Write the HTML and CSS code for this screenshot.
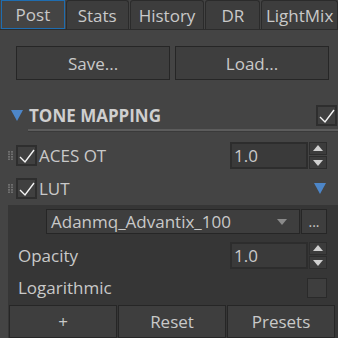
FILE: index.html
```html
<!DOCTYPE html>
<html lang="en">
<head>
  <meta charset="UTF-8" />
  <title>Post</title>
  <link rel="stylesheet" href="styles.css">
</head>
<body>
  <nav class="tabs">
    <div class="tab active tab-post">Post</div>
    <div class="tab tab-stats">Stats</div>
    <div class="tab tab-history">History</div>
    <div class="tab tab-dr">DR</div>
    <div class="tab tab-lightmix">LightMix</div>
  </nav>

  <div class="file-buttons">
    <button class="btn">Save...</button>
    <button class="btn">Load...</button>
  </div>

  <!-- Tone mapping rollout -->
  <div class="section-head">
    <span class="arrow-down"></span>
    <span class="section-title">TONE MAPPING</span>
    <span class="check">
      <svg viewBox="0 0 21 21"><polyline points="4,12 9,17 18,5" /></svg>
    </span>
  </div>

  <div class="row">
    <span class="grip"></span>
    <span class="check">
      <svg viewBox="0 0 21 21"><polyline points="4,12 9,17 18,5" /></svg>
    </span>
    <span class="label">ACES OT</span>
    <div class="spin">
      <input class="num" value="1.0" />
      <div class="spin-btns">
        <span class="spin-up"></span>
        <span class="spin-down"></span>
      </div>
    </div>
  </div>

  <div class="row">
    <span class="grip"></span>
    <span class="check">
      <svg viewBox="0 0 21 21"><polyline points="4,12 9,17 18,5" /></svg>
    </span>
    <span class="label">LUT</span>
    <span class="arrow-down small"></span>
  </div>

  <div class="panel">
    <div class="lut-row">
      <div class="select">
        <span>Adanmq_Advantix_100</span>
        <span class="select-arrow"></span>
      </div>
      <button class="dots">...</button>
    </div>

    <div class="prow">
      <span class="label">Opacity</span>
      <div class="spin">
        <input class="num" value="1.0" />
        <div class="spin-btns">
          <span class="spin-up"></span>
          <span class="spin-down"></span>
        </div>
      </div>
    </div>

    <div class="prow log-row">
      <span class="label">Logarithmic</span>
      <span class="check"></span>
    </div>

    <div class="bottom-buttons">
      <button class="btn">+</button>
      <button class="btn">Reset</button>
      <button class="btn">Presets</button>
    </div>
  </div>
</body>
</html>
```

FILE: styles.css
```css
/* Base */
body {
  margin: 0;
  background: #444444;
  color: #c9c9c9;
  font-family: 'Open Sans', 'Noto Sans', sans-serif;
  font-size: 17px;
  width: 338px;
  height: 338px;
  overflow: hidden;
}

/* Tabs */
.tabs {
  display: flex;
  height: 29px;
  border-bottom: 1px solid #2c2c2c;
}

.tab {
  box-sizing: border-box;
  height: 29px;
  display: flex;
  align-items: center;
  justify-content: center;
  background: #3d3d3d;
  border: 1px solid #2b2b2b;
  border-bottom: none;
  border-radius: 3px 3px 0 0;
  margin-right: 1px;
  line-height: 1;
}

.tab.active {
  background: #444444;
  border: 1px solid #1f6db0;
  border-radius: 0;
}

.tab-post { width: 64px; margin-left: 1px; }
.tab-stats { width: 63px; }
.tab-history { width: 75px; }
.tab-dr { width: 55px; }
.tab-lightmix { width: 77px; margin-right: 0; }

/* Buttons */
.btn {
  box-sizing: border-box;
  background: #3e3e3e;
  border: 1px solid #262626;
  color: #c9c9c9;
  font-family: inherit;
  font-size: 17px;
  padding: 0;
}

.file-buttons {
  display: flex;
  gap: 5px;
  padding: 16px 9px 0 16px;
}

.file-buttons .btn {
  width: 155px;
  height: 34px;
}

/* Section header */
.section-head {
  display: flex;
  align-items: center;
  height: 26px;
  margin-top: 22px;
  padding-left: 11px;
  position: relative;
}

.section-head::after {
  content: "";
  position: absolute;
  left: 28px;
  right: 0;
  bottom: -4px;
  height: 2px;
  background: #5c5c5c;
  border-bottom: 1px solid #3a3a3a;
}

.arrow-down {
  width: 0;
  height: 0;
  border-left: 6px solid transparent;
  border-right: 6px solid transparent;
  border-top: 11px solid #4d86c8;
}

.arrow-down.small {
  margin-left: auto;
  margin-right: 12px;
}

.section-title {
  font-weight: 700;
  font-size: 17px;
  margin-left: 6px;
  color: #cfcfcf;
}

.section-head .check {
  margin-left: auto;
  margin-right: 1px;
}

/* Checkboxes */
.check {
  box-sizing: border-box;
  width: 21px;
  height: 21px;
  border: 2px solid #2e2e2e;
  background: #404040;
  flex: none;
  display: block;
}

.check svg {
  display: block;
  width: 21px;
  height: 21px;
  margin: -2px;
}

.check polyline {
  fill: none;
  stroke: #f4f4f4;
  stroke-width: 1.4;
}

/* Rows */
.row {
  display: flex;
  align-items: center;
  height: 28px;
  padding-left: 8px;
}

.section-head + .row {
  margin-top: 13px;
}

.row + .row {
  margin-top: 5px;
}

.grip {
  width: 5px;
  height: 9px;
  margin-right: 3px;
  background-image: radial-gradient(circle at 1px 1px, #6f6f6f 1px, transparent 1px);
  background-size: 3px 2.5px;
}

.label {
  margin-left: 2px;
  color: #c9c9c9;
}

/* Spinner */
.spin {
  display: flex;
  gap: 1px;
  margin-left: auto;
  margin-right: 11px;
}

.num {
  box-sizing: border-box;
  width: 78px;
  height: 27px;
  background: #3a3a3a;
  border: 2px solid #2d2d2d;
  color: #c9c9c9;
  font-family: inherit;
  font-size: 17px;
  padding: 0 0 0 2px;
  outline: none;
}

.spin-btns {
  display: flex;
  flex-direction: column;
  gap: 1px;
}

.spin-up,
.spin-down {
  box-sizing: border-box;
  width: 18px;
  height: 13px;
  border: 1px solid #2d2d2d;
  background: #3c3c3c;
  position: relative;
}

.spin-up::after,
.spin-down::after {
  content: "";
  position: absolute;
  left: 3px;
  width: 0;
  height: 0;
  border-left: 5px solid transparent;
  border-right: 5px solid transparent;
}

.spin-up::after {
  top: 2px;
  border-bottom: 6px solid #d0d0d0;
}

.spin-down::after {
  top: 3px;
  border-top: 6px solid #d0d0d0;
}

/* LUT panel */
.panel {
  margin: 3px 0 0 8px;
  background: #363636;
  height: 140px;
  padding-top: 4px;
  box-sizing: border-box;
}

.lut-row {
  display: flex;
  gap: 1px;
  padding-left: 38px;
}

.select {
  box-sizing: border-box;
  width: 254px;
  height: 25px;
  border: 1px solid #262626;
  background: #3e3e3e;
  display: flex;
  align-items: center;
  padding: 0 12px 0 4px;
}

.select-arrow {
  margin-left: auto;
  width: 0;
  height: 0;
  border-left: 5px solid transparent;
  border-right: 5px solid transparent;
  border-top: 6px solid #8a8a8a;
}

.dots {
  box-sizing: border-box;
  width: 26px;
  height: 25px;
  background: #3e3e3e;
  border: 1px solid #262626;
  color: #c9c9c9;
  font-family: inherit;
  font-size: 14px;
  padding: 0;
  line-height: 1;
}

.prow {
  display: flex;
  align-items: center;
  padding-left: 8px;
  height: 27px;
  margin-top: 8px;
}

.log-row {
  margin-top: 7px;
  height: 23px;
}

.log-row .check {
  margin-left: auto;
  margin-right: 11px;
  width: 20px;
  height: 20px;
  border-width: 1px;
  border-color: #2a2a2a;
  background: #3e3e3e;
}

.bottom-buttons {
  display: flex;
  gap: 1px;
  margin-top: 6px;
  padding-left: 1px;
}

.bottom-buttons .btn {
  width: 108px;
  height: 33px;
}
```
